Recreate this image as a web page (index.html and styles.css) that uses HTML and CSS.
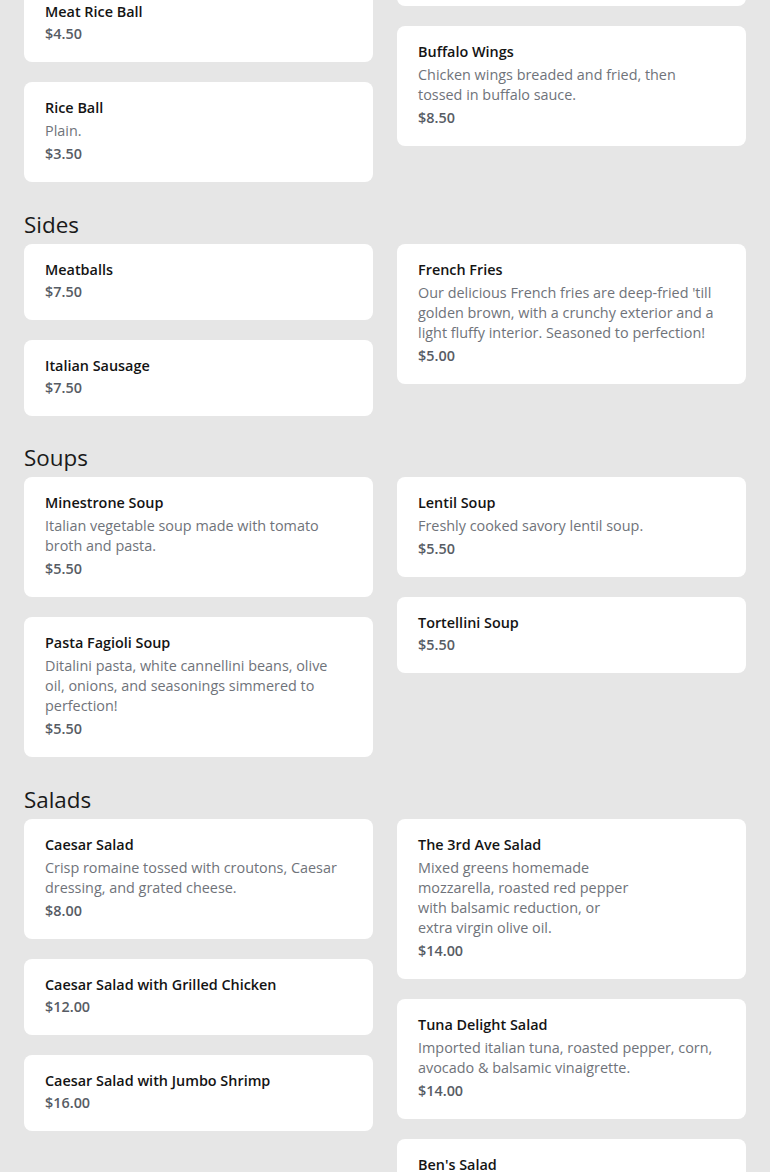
FILE: index.html
```html
<!DOCTYPE html>
<html lang="en">
<head>
<meta charset="utf-8">
<title>Menu</title>
<link rel="stylesheet" href="styles.css">
</head>
<body>
<main class="menu">
  <section class="section section--partial">
    <div class="cols">
      <div class="col">
        <article class="card">
          <h3 class="card__title">Meat Rice Ball</h3>
          <p class="card__price">$4.50</p>
        </article>
        <article class="card">
          <h3 class="card__title">Rice Ball</h3>
          <p class="card__desc">Plain.</p>
          <p class="card__price">$3.50</p>
        </article>
      </div>
      <div class="col">
        <article class="card card--cut"></article>
        <article class="card">
          <h3 class="card__title">Buffalo Wings</h3>
          <p class="card__desc">Chicken wings breaded and fried, then tossed in buffalo sauce.</p>
          <p class="card__price">$8.50</p>
        </article>
      </div>
    </div>
  </section>

  <section class="section">
    <h2 class="section__title">Sides</h2>
    <div class="cols">
      <div class="col">
        <article class="card">
          <h3 class="card__title">Meatballs</h3>
          <p class="card__price">$7.50</p>
        </article>
        <article class="card">
          <h3 class="card__title">Italian Sausage</h3>
          <p class="card__price">$7.50</p>
        </article>
      </div>
      <div class="col">
        <article class="card">
          <h3 class="card__title">French Fries</h3>
          <p class="card__desc">Our delicious French fries are deep-fried 'till golden brown, with a crunchy exterior and a light fluffy interior. Seasoned to perfection!</p>
          <p class="card__price">$5.00</p>
        </article>
      </div>
    </div>
  </section>

  <section class="section">
    <h2 class="section__title">Soups</h2>
    <div class="cols">
      <div class="col">
        <article class="card">
          <h3 class="card__title">Minestrone Soup</h3>
          <p class="card__desc">Italian vegetable soup made with tomato broth and pasta.</p>
          <p class="card__price">$5.50</p>
        </article>
        <article class="card">
          <h3 class="card__title">Pasta Fagioli Soup</h3>
          <p class="card__desc">Ditalini pasta, white cannellini beans, olive oil, onions, and seasonings simmered to perfection!</p>
          <p class="card__price">$5.50</p>
        </article>
      </div>
      <div class="col">
        <article class="card">
          <h3 class="card__title">Lentil Soup</h3>
          <p class="card__desc">Freshly cooked savory lentil soup.</p>
          <p class="card__price">$5.50</p>
        </article>
        <article class="card">
          <h3 class="card__title">Tortellini Soup</h3>
          <p class="card__price">$5.50</p>
        </article>
      </div>
    </div>
  </section>

  <section class="section">
    <h2 class="section__title">Salads</h2>
    <div class="cols">
      <div class="col">
        <article class="card">
          <h3 class="card__title">Caesar Salad</h3>
          <p class="card__desc">Crisp romaine tossed with croutons, Caesar dressing, and grated cheese.</p>
          <p class="card__price">$8.00</p>
        </article>
        <article class="card">
          <h3 class="card__title">Caesar Salad with Grilled Chicken</h3>
          <p class="card__price">$12.00</p>
        </article>
        <article class="card">
          <h3 class="card__title">Caesar Salad with Jumbo Shrimp</h3>
          <p class="card__price">$16.00</p>
        </article>
      </div>
      <div class="col">
        <article class="card">
          <h3 class="card__title">The 3rd Ave Salad</h3>
          <p class="card__desc">Mixed greens homemade<br>mozzarella, roasted red pepper<br>with balsamic reduction, or<br>extra virgin olive oil.</p>
          <p class="card__price">$14.00</p>
        </article>
        <article class="card">
          <h3 class="card__title">Tuna Delight Salad</h3>
          <p class="card__desc">Imported italian tuna, roasted pepper, corn, avocado &amp; balsamic vinaigrette.</p>
          <p class="card__price">$14.00</p>
        </article>
        <article class="card">
          <h3 class="card__title">Ben's Salad</h3>
          <p class="card__desc">&nbsp;</p>
          <p class="card__price">&nbsp;</p>
        </article>
      </div>
    </div>
  </section>
</main>
</body>
</html>
```

FILE: styles.css
```css
* {
  box-sizing: border-box;
}

html,
body {
  margin: 0;
  padding: 0;
  background: #e6e6e6;
}

body {
  font-family: "Open Sans", "Noto Sans", sans-serif;
  color: #111111;
  padding: 0 24px;
}

.menu {
  margin-top: -14px;
  padding-bottom: 40px;
}

.section {
  margin-top: 26.5px;
}

.section--partial {
  margin-top: 0;
}

.section__title {
  margin: 0 0 3px;
  font-size: 22.4px;
  line-height: 32px;
  font-weight: 400;
  color: #1a1a1a;
}

.cols {
  display: grid;
  grid-template-columns: 1fr 1fr;
  column-gap: 24px;
  align-items: start;
}

.col {
  display: flex;
  flex-direction: column;
  gap: 20px;
}

.card {
  background: #ffffff;
  border-radius: 8px;
  padding: 16px 26px 18px 21px;
  display: flex;
  flex-direction: column;
}

.card--cut {
  height: 20px;
  padding: 0;
}

.card__title {
  margin: 0;
  font-size: 14.4px;
  line-height: 20px;
  font-weight: 600;
  color: #141414;
}

.card__desc {
  margin: 3px 0 1px;
  font-size: 14.4px;
  line-height: 20px;
  color: #6f737a;
}

.card__price {
  margin: 2px 0 0;
  font-size: 14.4px;
  line-height: 20px;
  font-weight: 600;
  color: #575c64;
}
```
